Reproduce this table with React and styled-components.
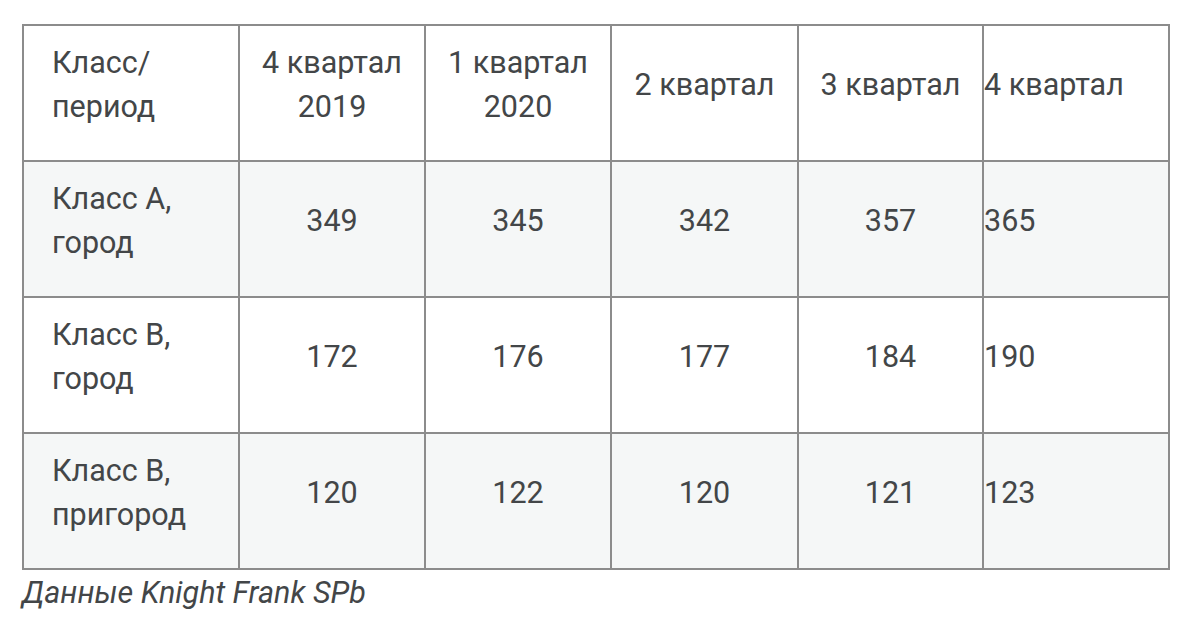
import React from "react";
import styled, { createGlobalStyle } from "styled-components";

const Global = createGlobalStyle`
  html, body { margin: 0; padding: 0; background: #fff; }
  body { font-family: Roboto, "Noto Sans", Arial, sans-serif; color: #434648; }
`;

const Page = styled.div`
  padding: 24px 0 0 22px;
`;

const Table = styled.table`
  border-collapse: collapse;
  table-layout: fixed;
  width: 1148px;
  font-size: 30.5px;
  line-height: 44px;
  color: #434648;
`;

const Caption = styled.caption`
  caption-side: bottom;
  text-align: left;
  font-style: italic;
  font-size: 30.5px;
  line-height: 44px;
  padding-top: 1px;
  color: #434648;
`;

const Row = styled.tr`
  height: 136px;
  background: ${(p) => (p.$shaded ? "#f5f7f7" : "#ffffff")};
`;

const Cell = styled.td`
  border: 2px solid #8c8c8c;
  vertical-align: middle;
  padding: ${(p) => (p.$first ? "0 20px 16px 28px" : p.$last ? "0 0 16px 0" : "0 4px 16px")};
  text-align: ${(p) => (p.$first || p.$last ? "left" : "center")};
  font-weight: 400;
  overflow: hidden;
`;

const widths = [216, 186, 186, 187, 185, 186];

const header = ["Класс/ период", "4 квартал 2019", "1 квартал 2020", "2 квартал", "3 квартал", "4 квартал"];
const rows = [
  ["Класс А, город", "349", "345", "342", "357", "365"],
  ["Класс В, город", "172", "176", "177", "184", "190"],
  ["Класс В, пригород", "120", "122", "120", "121", "123"],
];

function renderRow(cells, shaded, key, head) {
  return (
    <Row $shaded={shaded} key={key}>
      {cells.map((c, i) => (
        <Cell as={head ? "th" : "td"} key={i} $first={i === 0} $last={i === cells.length - 1}>
          {c}
        </Cell>
      ))}
    </Row>
  );
}

export default function App() {
  return (
    <>
      <Global />
      <Page>
        <Table>
          <colgroup>
            {widths.map((w, i) => (
              <col key={i} style={{ width: w }} />
            ))}
          </colgroup>
          <Caption>Данные Knight Frank SPb</Caption>
          <tbody>
            {renderRow(header, false, "h", true)}
            {rows.map((r, i) => renderRow(r, i % 2 === 0, i))}
          </tbody>
        </Table>
      </Page>
    </>
  );
}
